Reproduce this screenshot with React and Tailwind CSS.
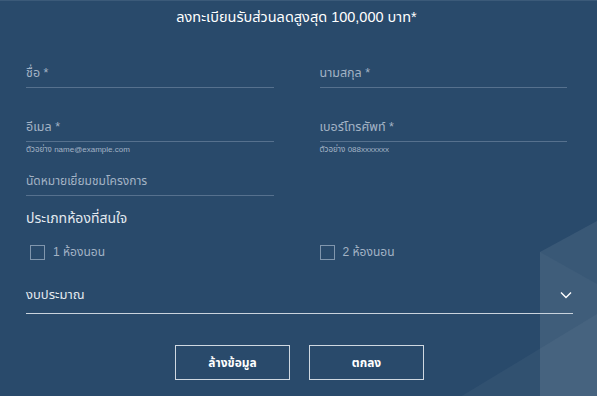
import React from 'react';

function Field({ label, hint }) {
    return (
        <div className="h-[54px]">
            <div className="h-[25px] border-b border-[#56718e] text-[12.5px] leading-[20px] text-[#a3b3c5]">{label}</div>
            {hint && <div className="mt-[2px] text-[8px] leading-[12px] text-[#a3b3c5]">{hint}</div>}
        </div>
    );
}

function Check({ label }) {
    return (
        <label className="flex items-center gap-[8px] pl-[4px]">
            <span className="w-[15px] h-[15px] border-[1.5px] border-[#8096ad]"></span>
            <span className="text-[12px] leading-[16px] text-[#a3b3c5]">{label}</span>
        </label>
    );
}

export default function App() {
    return (
        <div
            className="relative w-[597px] h-[396px] overflow-hidden bg-[#294a6b] border-t border-[#3b5a79] font-stretch-condensed"
            style={{ fontFamily: '"Liberation Sans", "Noto Sans Thai", "Noto Sans", sans-serif' }}
        >
            {/* background shapes */}
            <svg className="absolute inset-0 pointer-events-none" width="597" height="396" viewBox="0 0 597 396">
                <polygon points="540,251 597,220 597,396 540,396" fill="#ffffff" fillOpacity="0.08" />
                <polygon points="540,251 597,283 597,396 540,396" fill="#ffffff" fillOpacity="0.03" />
                <polygon points="460,396 597,313 597,396" fill="#ffffff" fillOpacity="0.04" />
            </svg>

            <div className="relative px-[26px] pr-[30px]">
                <h1 className="pt-[6px] text-center text-[14.5px] leading-[20px] text-white">
                    ลงทะเบียนรับส่วนลดสูงสุด 100,000 บาท*
                </h1>

                <div className="mt-[36px] grid grid-cols-2 gap-x-[46px]">
                    <Field label="ชื่อ *" />
                    <Field label="นามสกุล *" />
                    <Field label="อีเมล *" hint="ตัวอย่าง name@example.com" />
                    <Field label="เบอร์โทรศัพท์ *" hint="ตัวอย่าง 088xxxxxxx" />
                    <div className="h-[25px] border-b border-[#56718e] text-[12px] leading-[20px] text-[#a3b3c5] font-stretch-extra-condensed">
                        นัดหมายเยี่ยมชมโครงการ
                    </div>
                </div>

                <div className="mt-[12px] text-[14px] leading-[20px] text-[#e3e9ef]">ประเภทห้องที่สนใจ</div>

                <div className="mt-[16px] grid grid-cols-2 gap-x-[46px]">
                    <Check label="1 ห้องนอน" />
                    <div className="-ml-[4px]">
                        <Check label="2 ห้องนอน" />
                    </div>
                </div>

                <div className="mt-[25px] w-[547px] h-[29px] flex items-start justify-between border-b border-[#c9d3dd]">
                    <span className="text-[13px] leading-[20px] text-[#e3e9ef]">งบประมาณ</span>
                    <svg className="mt-[6px] mr-[1px]" width="12" height="8" viewBox="0 0 12 8">
                        <path d="M1 1.5 L6 6.5 L11 1.5" fill="none" stroke="#ffffff" strokeWidth="1.4" />
                    </svg>
                </div>

                <div className="mt-[31px] flex justify-center gap-[19px] pl-[6px]">
                    <button className="w-[115px] h-[35px] border border-[#cfd8e1] text-[12px] font-bold text-white">
                        ล้างข้อมูล
                    </button>
                    <button className="w-[115px] h-[35px] border border-[#cfd8e1] text-[12px] font-bold text-white">
                        ตกลง
                    </button>
                </div>
            </div>
        </div>
    );
}
